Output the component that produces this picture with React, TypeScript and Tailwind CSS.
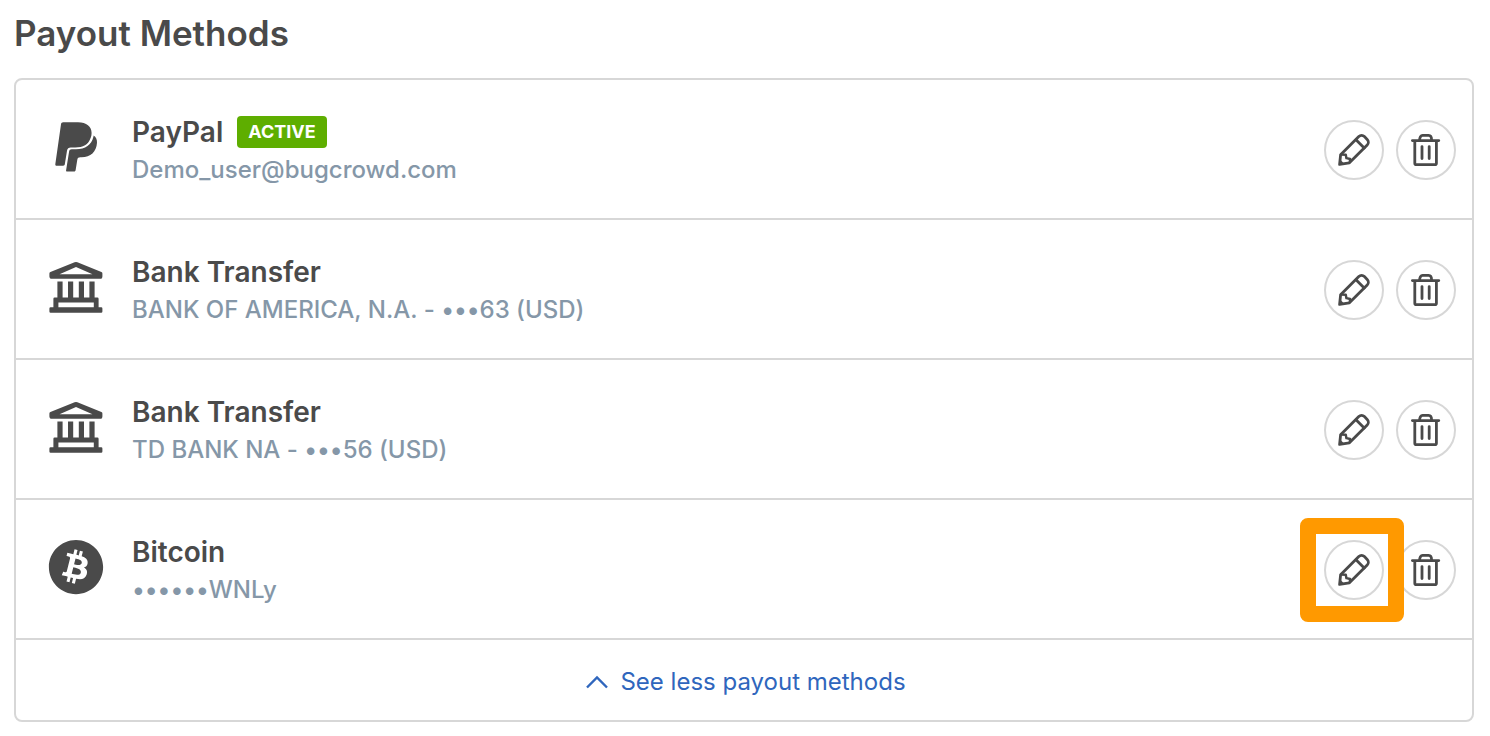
import { useState } from 'react'
import type { ReactNode } from 'react'
import { FaBitcoin } from 'react-icons/fa'

type Method = {
  id: string
  name: string
  detail: string
  icon: ReactNode
  active?: boolean
  highlighted?: boolean
}

function PayPalIcon() {
  return (
    <svg className="size-14" viewBox="-1 -1 56 56" fill="currentColor" aria-hidden="true">
      <path d="M14.2 2.3H29C37.5 2.3 42.6 6.4 42.6 13c0 1.8-.3 3.2-.8 4.6-2.4 7.4-7.8 9.9-15.6 9.9h-4.4c-2.2 0-3.4 1-3.8 3.2l-2.2 13.6c-.2 1-.7 1.4-1.6 1.4H7.6c-1 0-1.4-.6-1.3-1.5L12 4.2c.2-1.2 1-1.9 2.2-1.9z" />
      <path d="M44.6 15.4c2.4 1.6 3.6 4 3.4 7.4-.6 9-6.3 14.5-15.5 14.5h-1.2c-1.8 0-2.7.8-3 2.4l-1.7 10.6c-.2.9-.7 1.3-1.6 1.3h-6.8c-.9 0-1.3-.5-1.1-1.4l3-18.7c.2-1.6 1.1-2.3 2.6-2.3H27c9.4 0 15.5-4 17.4-12.4.1-.5.2-1 .2-1.4z" />
    </svg>
  )
}

function BankIcon() {
  return (
    <svg className="size-14" viewBox="-1 -1 56 56" fill="currentColor" aria-hidden="true">
      <path
        fillRule="evenodd"
        d="M25.6 2.2q1.4-.6 2.8 0L52.4 12q1 .4 1 1.4v3.2q0 1.2-1 2.2H1.6q-1.2-1-1.2-2.2v-3.2q0-1 1-1.4zM27 7 10.5 14.2h33z"
      />
      <path d="M8.4 21.5h5.2v17H8.4zM19 21.5h5.2v17H19zM29.8 21.5H35v17h-5.2zM40.4 21.5h5.2v17h-5.2z" />
      <path
        fillRule="evenodd"
        d="M5.6 37.5h42.8q1.2 0 1.2 1.2v8.6h2.6q1.2 0 1.2 1.2v3q0 1.2-1.2 1.2H1.6q-1.2 0-1.2-1.2v-3q0-1.2 1.2-1.2h2.8v-8.6q0-1.2 1.2-1.2zM9.4 42.5v4.8h35.4v-4.8z"
      />
    </svg>
  )
}

function PencilIcon() {
  return (
    <svg
      className="size-8"
      viewBox="0 0 32 32"
      fill="none"
      stroke="currentColor"
      strokeWidth={2.8}
      strokeLinejoin="round"
      strokeLinecap="round"
      aria-hidden="true"
    >
      <path d="M1.6 30.4 2.6 20.8 20.8 2.6a4 4 0 0 1 5.6 0l2.8 2.8a4 4 0 0 1 0 5.6L11.4 28.8z" />
      <path d="M18 5.8l8.2 8.2" />
      <path d="M3 20.6l4.8.2.6 3.4 3.8.8-.4 3" strokeWidth={2.4} />
      <path d="M1.2 30.8l.8-5.6 4.4 4.8z" fill="currentColor" stroke="none" />
    </svg>
  )
}

function TrashIcon() {
  return (
    <svg
      className="size-8"
      viewBox="0 0 32 32"
      fill="none"
      stroke="currentColor"
      strokeWidth={2.8}
      strokeLinejoin="round"
      strokeLinecap="round"
      aria-hidden="true"
    >
      <path d="M2.4 6.6h26.4M4.8 6.6v22.6a1.4 1.4 0 0 0 1.4 1.4h18.8a1.4 1.4 0 0 0 1.4-1.4V6.6" />
      <path d="M9.6 6.2c0-3 1.2-4.8 3-4.8h6c1.8 0 3 1.8 3 4.8" />
      <path d="M12 12.6v12M19.2 12.6v12" />
    </svg>
  )
}

const methods: Method[] = [
  {
    id: 'paypal',
    name: 'PayPal',
    detail: 'Demo_user@bugcrowd.com',
    icon: <PayPalIcon />,
    active: true,
  },
  {
    id: 'bank-boa',
    name: 'Bank Transfer',
    detail: 'BANK OF AMERICA, N.A. - •••63 (USD)',
    icon: <BankIcon />,
  },
  {
    id: 'bank-td',
    name: 'Bank Transfer',
    detail: 'TD BANK NA - •••56 (USD)',
    icon: <BankIcon />,
  },
  {
    id: 'bitcoin',
    name: 'Bitcoin',
    detail: '••••••WNLy',
    icon: <FaBitcoin className="size-14" aria-hidden="true" />,
    highlighted: true,
  },
]

function IconButton({ label, children }: { label: string; children: ReactNode }) {
  return (
    <button
      type="button"
      aria-label={label}
      className="flex size-[60px] items-center justify-center rounded-full border-2 border-[#d7d7d7] bg-white"
    >
      {children}
    </button>
  )
}

function MethodRow({ method }: { method: Method }) {
  return (
    <li className="flex h-[140px] items-center border-b-2 border-[#d7d7d7] pt-0.5 pr-4 pl-8">
      <div className="mr-7 shrink-0 pb-1.5">{method.icon}</div>
      <div className="min-w-0 flex-1 pt-[3px]">
        <div className="flex items-center gap-3.5">
          <h2 className="text-[28px] leading-9 font-semibold">{method.name}</h2>
          {method.active && (
            <span className="rounded bg-[#5eae00] px-[11px] text-[18px] leading-8 font-bold text-white">
              ACTIVE
            </span>
          )}
        </div>
        <p className="text-[24px] leading-10 font-medium text-[#8597a8] [font-feature-settings:'calt'_0]">
          {method.detail}
        </p>
      </div>
      <div className="flex gap-3">
        <div className="relative">
          <IconButton label={`Edit ${method.name}`}>
            <PencilIcon />
          </IconButton>
          {/* Callout frame around the edit button */}
          {method.highlighted && (
            <div className="pointer-events-none absolute -inset-y-[22px] -right-5 -left-6 z-10 rounded-lg border-16 border-[#ff9900]" />
          )}
        </div>
        <IconButton label={`Delete ${method.name}`}>
          <TrashIcon />
        </IconButton>
      </div>
    </li>
  )
}

export default function App() {
  const [expanded, setExpanded] = useState(true)
  const visible = expanded ? methods : methods.slice(0, 1)

  return (
    <main className="min-h-screen bg-white pt-2 pr-4 pl-3.5 font-['Inter','Liberation_Sans',sans-serif] text-[#4a4a4a]">
      <h1 className="mb-5 text-[35px] leading-[50px] font-semibold">Payout Methods</h1>
      <section className="rounded-lg border-2 border-[#d7d7d7]">
        <ul>
          {visible.map((m) => (
            <MethodRow key={m.id} method={m} />
          ))}
        </ul>
        <button
          type="button"
          onClick={() => setExpanded(!expanded)}
          className="flex h-20 w-full items-center justify-center gap-3 pt-1 pl-1 text-[24px] text-[#2f66bd]"
        >
          <svg
            className={expanded ? 'h-3.5 w-[22px]' : 'h-3.5 w-[22px] rotate-180'}
            viewBox="0 0 22 14"
            fill="none"
            stroke="currentColor"
            strokeWidth={2.4}
            aria-hidden="true"
          >
            <path d="M1 12.5 11 2.5l10 10" />
          </svg>
          {expanded ? 'See less payout methods' : 'See more payout methods'}
        </button>
      </section>
    </main>
  )
}
